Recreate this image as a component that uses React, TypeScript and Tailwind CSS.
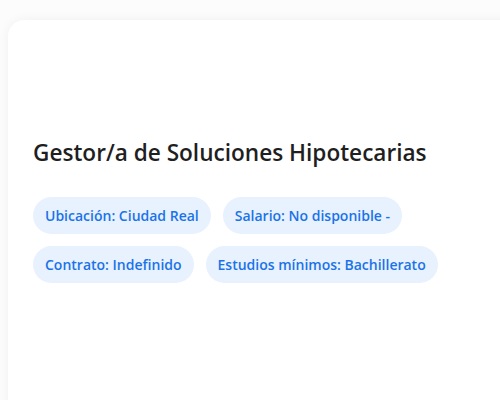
export default function App() {
  const tags = [
    "Ubicación: Ciudad Real",
    "Salario: No disponible -",
    "Contrato: Indefinido",
    "Estudios mínimos: Bachillerato",
  ];

  return (
    <main className="h-screen bg-[#fcfcfc] pl-2 pt-5 overflow-hidden" style={{ fontFamily: '"Open Sans", "Noto Sans", sans-serif' }}>
      <section className="w-[520px] h-[420px] bg-white rounded-tl-2xl shadow-[0_0_12px_rgba(0,0,0,0.05)] pl-[25px] pt-[118px]">
        <h1 className="text-[22.6px] leading-[30px] font-semibold text-[#1f1f1f] mb-[29px]">
          Gestor/a de Soluciones Hipotecarias
        </h1>
        <div className="flex flex-wrap gap-3 w-[420px]">
          {tags.map((tag) => (
            <span
              key={tag}
              className="h-[37px] flex items-center px-3 rounded-full bg-[#e8f1fe] text-[#1a73e8] text-[14px] font-semibold"
            >
              {tag}
            </span>
          ))}
        </div>
      </section>
    </main>
  );
}
